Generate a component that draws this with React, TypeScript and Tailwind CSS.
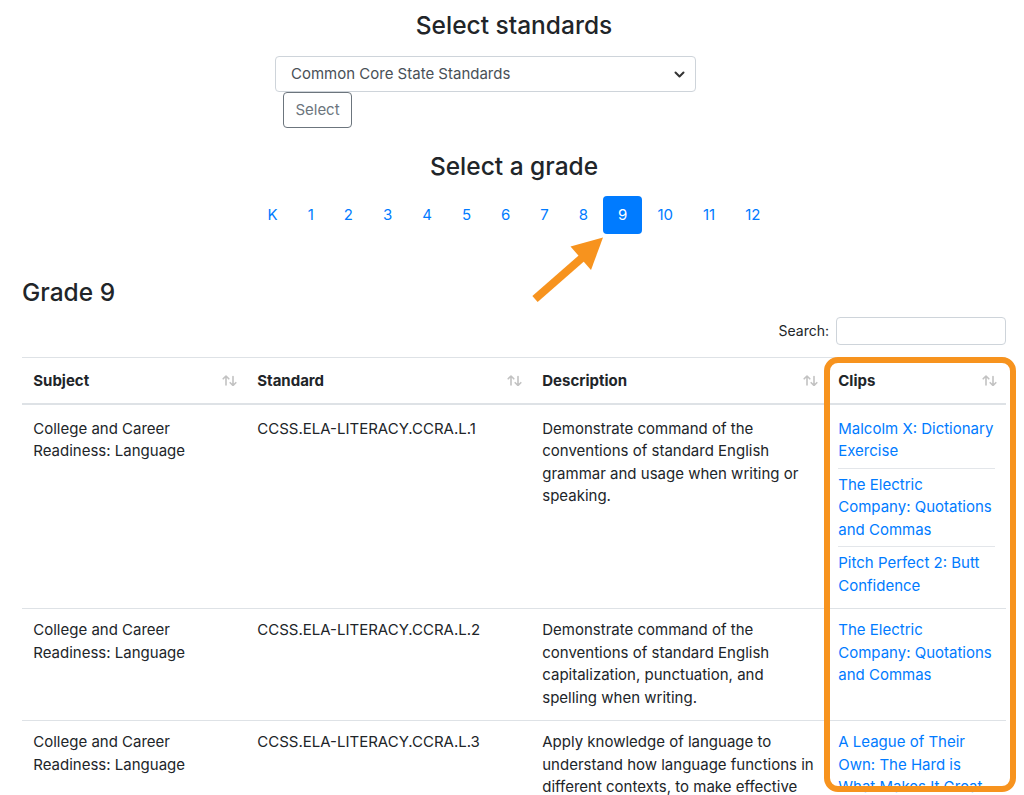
import React from "react";

const SortIcon = () => (
  <svg width="15" height="11" viewBox="0 0 15 11" fill="none" stroke="#c2c2c2" strokeWidth="1.6" strokeLinecap="round" strokeLinejoin="round" className="shrink-0 mr-[-2px]">
    <path d="M4 10V1M1.2 3.8L4 1l2.8 2.8" />
    <path d="M11 1.5v9M8.2 7.7L11 10.5l2.8-2.8" />
  </svg>
);

type Row = { subject: string; standard: string; desc: string; clips: string[] };

const rows: Row[] = [
  {
    subject: "College and Career Readiness: Language",
    standard: "CCSS.ELA-LITERACY.CCRA.L.1",
    desc: "Demonstrate command of the conventions of standard English grammar and usage when writing or speaking.",
    clips: [
      "Malcolm X: Dictionary Exercise",
      "The Electric Company: Quotations and Commas",
      "Pitch Perfect 2: Butt Confidence",
    ],
  },
  {
    subject: "College and Career Readiness: Language",
    standard: "CCSS.ELA-LITERACY.CCRA.L.2",
    desc: "Demonstrate command of the conventions of standard English capitalization, punctuation, and spelling when writing.",
    clips: ["The Electric Company: Quotations and Commas"],
  },
  {
    subject: "College and Career Readiness: Language",
    standard: "CCSS.ELA-LITERACY.CCRA.L.3",
    desc: "Apply knowledge of language to understand how language functions in different contexts, to make effective choices for meaning or style, and to comprehend more fully when reading or listening.",
    clips: ["A League of Their Own: The Hard is What Makes It Great", "Moneyball: Wordplay"],
  },
];

const grades = ["K", "1", "2", "3", "4", "5", "6", "7", "8", "9", "10", "11", "12"];

export default function App() {
  return (
    <div className="relative h-[795px] w-[1024px] overflow-hidden bg-white text-[#212529] font-[Inter,'Noto_Sans',sans-serif] text-[15px] leading-[22.5px]">
      <div className="pl-[22px] pr-[18px]">
        <h3 className="pt-[10px] text-center text-[24.5px] leading-[31.5px] font-medium">Select standards</h3>
        <div className="mt-[14.5px] ml-[253px] w-[421px] h-[36px] flex items-center justify-between rounded-[4px] border border-[#ced4da] pl-[15px] pr-[10px]">
          <span className="text-[15px] text-[#495057]">Common Core State Standards</span>
          <svg width="11" height="7" viewBox="0 0 11 7" fill="none" stroke="#333" strokeWidth="2" strokeLinecap="round" strokeLinejoin="round">
            <path d="M1.5 1.5l4 4 4-4" />
          </svg>
        </div>
        <button className="ml-[261px] block h-[36px] w-[69px] rounded-[4px] border border-[#6c757d] text-[15px] text-[#6c757d]">Select</button>

        <h3 className="mt-[22.5px] text-center text-[24.5px] leading-[31.5px] font-medium">Select a grade</h3>
        <div className="mt-[14.25px] flex justify-center">
          {grades.map((g) => (
            <a
              key={g}
              className={
                g === "9"
                  ? "px-[15px] py-[7.5px] rounded-[4px] bg-[#007bff] text-white"
                  : "px-[15px] py-[7.5px] rounded-[4px] text-[#007bff]"
              }
            >
              {g}
            </a>
          ))}
        </div>

        <h3 className="mt-[43.5px] text-[24.5px] leading-[31.5px] font-medium">Grade 9</h3>

        <div className="mt-[8.5px] flex items-center justify-end">
          <label className="text-[14px] mr-[7px]">Search:</label>
          <input className="h-[28px] w-[170px] rounded-[4px] border border-[#ced4da]" />
        </div>

        <table className="mt-[12px] w-full table-fixed border-collapse">
          <colgroup>
            <col className="w-[224px]" />
            <col className="w-[285px]" />
            <col className="w-[296px]" />
            <col className="w-[179px]" />
          </colgroup>
          <thead>
            <tr>
              {["Subject", "Standard", "Description", "Clips"].map((h) => (
                <th key={h} className="border-t border-b-2 border-[#dee2e6] p-[11.25px] text-left font-bold">
                  <div className="flex items-center justify-between">
                    <span>{h}</span>
                    <SortIcon />
                  </div>
                </th>
              ))}
            </tr>
          </thead>
          <tbody>
            {rows.map((r, i) => (
              <tr key={r.standard}>
                <td className={(i === 0 ? "pt-[12.5px] " : "pt-[10.5px] ") + "border-t border-[#dee2e6] px-[11.25px] pb-[10.5px] align-top"}>{r.subject}</td>
                <td className={(i === 0 ? "pt-[12.5px] " : "pt-[10.5px] ") + "border-t border-[#dee2e6] px-[11.25px] pb-[10.5px] align-top"}>{r.standard}</td>
                <td className={(i === 0 ? "pt-[12.5px] " : "pt-[10.5px] ") + "border-t border-[#dee2e6] px-[11.25px] pb-[10.5px] align-top"}>{r.desc}</td>
                <td className={(i === 0 ? "pt-[12.5px] " : "pt-[10.5px] ") + "border-t border-[#dee2e6] px-[11.25px] pb-[10.5px] align-top"}>
                  <ul>
                    {r.clips.map((c) => (
                      <li key={c} className="border-t border-[#e3e6ea] py-[5px] first:border-t-0 first:pt-0 last:pb-0">
                        <a className="text-[#007bff]">{c}</a>
                      </li>
                    ))}
                  </ul>
                </td>
              </tr>
            ))}
          </tbody>
        </table>
      </div>

      {/* annotation arrow */}
      <svg className="absolute left-[525px] top-[230px] pointer-events-none" width="85" height="80" viewBox="0 0 85 80">
        <line x1="10" y1="69" x2="58" y2="27" stroke="#F7931E" strokeWidth="8" />
        <polygon points="78,7.5 45.5,16.5 66,40" fill="#F7931E" />
      </svg>

      {/* annotation box */}
      <div className="absolute left-[824px] top-[357px] h-[435px] w-[192px] rounded-[14px] border-[6px] border-[#F7931E] pointer-events-none" />
    </div>
  );
}
